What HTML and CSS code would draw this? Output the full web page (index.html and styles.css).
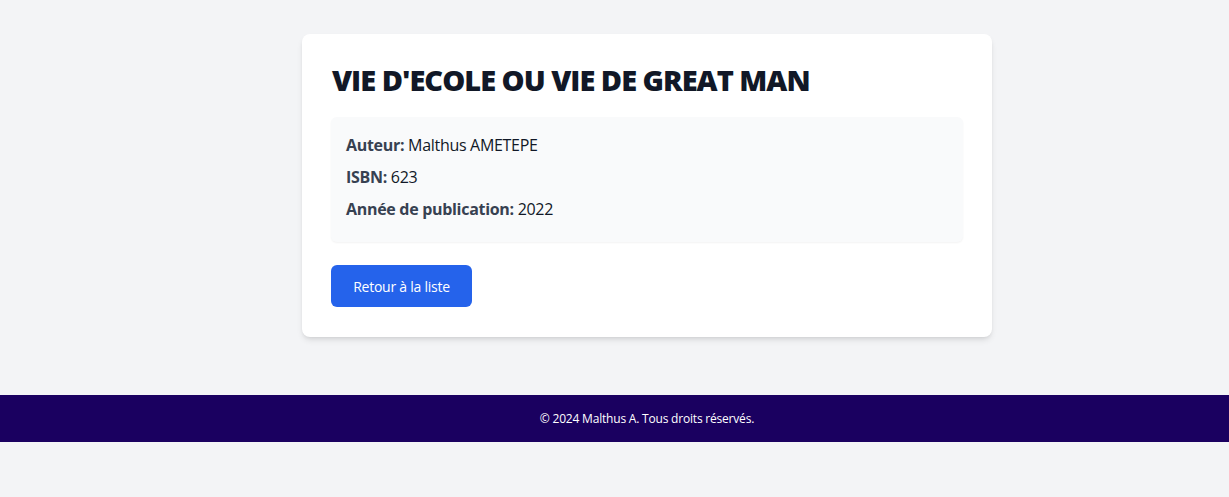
FILE: index.html
```html
<!DOCTYPE html>
<html lang="fr">
<head>
<meta charset="utf-8">
<title>Vie d'école ou vie de great man</title>
<link rel="stylesheet" href="styles.css">
</head>
<body>
<main class="page">
  <div class="card">
    <h1 class="title">VIE D'ECOLE OU VIE DE GREAT MAN</h1>
    <div class="details">
      <p class="row"><strong class="label">Auteur:</strong> Malthus AMETEPE</p>
      <p class="row"><strong class="label">ISBN:</strong> 623</p>
      <p class="row"><strong class="label">Année de publication:</strong> 2022</p>
    </div>
    <a class="btn" href="#">Retour à la liste</a>
  </div>
</main>
<footer class="footer">
  <p class="footer-text">© 2024 Malthus A. Tous droits réservés.</p>
</footer>
</body>
</html>
```
FILE: styles.css
```css
html, body {
  margin: 0;
  padding: 0;
}
body {
  background: #f3f4f6;
  font-family: "Open Sans", "Noto Sans", sans-serif;
  color: #111827;
  min-height: 497px;
}
.page {
  padding: 34px 0 58px 65px;
  display: flex;
  justify-content: center;
}
.card {
  width: 690px;
  box-sizing: border-box;
  background: #fff;
  border-radius: 8px;
  box-shadow: 0 4px 6px -1px rgba(0,0,0,0.1), 0 2px 4px -2px rgba(0,0,0,0.1);
  padding: 28px 29px 30px 29px;
}
.title {
  margin: 0 0 19px 1px;
  font-size: 29px;
  line-height: 36px;
  font-weight: 800;
  letter-spacing: -1px;
  color: #111827;
}
.details {
  background: #f9fafb;
  border-radius: 6px;
  box-shadow: 0 1px 2px 0 rgba(0,0,0,0.05);
  padding: 16px 15px 21px;
  display: flex;
  flex-direction: column;
  gap: 8px;
}
.row {
  margin: 0;
  font-size: 16px;
  line-height: 24px;
  letter-spacing: -0.3px;
  color: #111827;
}
.label {
  font-weight: 700;
  color: #374151;
}
.btn {
  display: inline-flex;
  align-items: center;
  justify-content: center;
  margin-top: 23px;
  width: 141px;
  height: 42px;
  box-sizing: border-box;
  background: #2563eb;
  color: #fff;
  font-size: 14px;
  letter-spacing: -0.25px;
  text-decoration: none;
  border-radius: 6px;
}
.footer {
  background: #1a0060;
  height: 47px;
  display: flex;
  align-items: center;
  justify-content: center;
  padding-left: 65px;
}
.footer-text {
  margin: 0;
  color: #fff;
  font-size: 12px;
  letter-spacing: -0.2px;
}
```
